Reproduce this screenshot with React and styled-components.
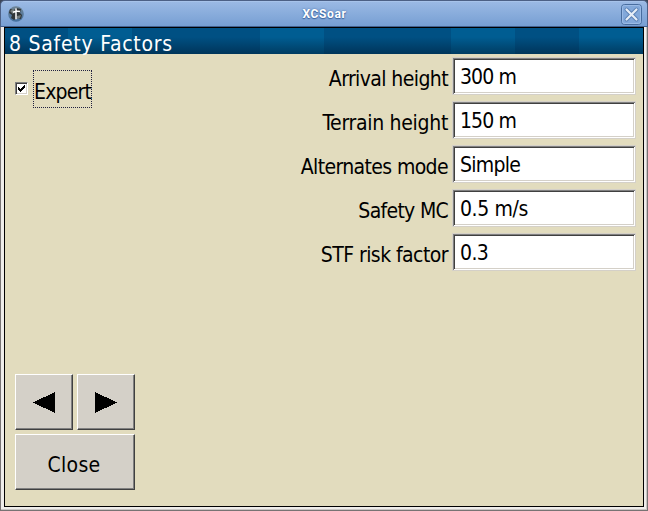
import React from 'react';
import styled, { createGlobalStyle } from 'styled-components';

const GlobalStyle = createGlobalStyle`
  * { box-sizing: border-box; }
  body {
    margin: 0;
    overflow: hidden;
    background: #3d4658;
    font-family: "DejaVu Sans Condensed", "DejaVu Sans", sans-serif;
    font-stretch: condensed;
    color: #000;
  }
`;

const Window = styled.main`
  width: 648px;
  height: 511px;
  display: flex;
  flex-direction: column;
`;

const WindowBar = styled.header`
  flex: none;
  height: 27px;
  display: grid;
  grid-template-columns: 26px 1fr 26px;
  align-items: center;
  border: 1px solid #4c6085;
  border-bottom-color: #42618f;
  border-radius: 5px 5px 0 0;
  background: linear-gradient(#b4cdf0 0, #9ab9e4 1px, #779fd3 100%);
`;

const WindowTitle = styled.h1`
  margin: 0;
  text-align: center;
  font: bold 12px/16px Roboto, "Liberation Sans", sans-serif;
  letter-spacing: 0.6px;
  color: #fff;
  text-shadow: 0 0 2px #3d659f, 0 1px 1px #3d659f;
  padding: 1px 0 0 1px;
`;

const AppIcon = styled.svg`
  width: 16px;
  height: 16px;
  margin: 0 0 0 7px;
`;

const CloseIcon = styled.svg`
  width: 21px;
  height: 21px;
  margin: 1px 0 0;
`;

const Frame = styled.div`
  flex: 1;
  min-height: 0;
  display: flex;
  border: 1px solid #777373;
  border-top: 0;
  background: #efedeb;
  padding: 0 3px 3px;
  box-shadow: inset -1px -1px #c8c5c3;
`;

const Dialog = styled.section`
  flex: 1;
  display: flex;
  flex-direction: column;
  border: 1px solid #000;
  background: #e2dcbe;
`;

const Caption = styled.h2`
  flex: none;
  height: 26px;
  margin: 0;
  padding: 4px 0 0 4px;
  font-size: 21px;
  line-height: 24px;
  font-weight: normal;
  letter-spacing: 0.75px;
  white-space: nowrap;
  color: #fff;
  background:
    linear-gradient(transparent 35%, rgba(0, 20, 40, 0.45)),
    linear-gradient(90deg,
      #005083 63px, #005d92 63px 127px, #005083 127px 255px,
      #005d92 255px 319px, #005083 319px 446px,
      #005d92 446px 510px, #005083 510px 574px, #005d92 574px);
`;

const Content = styled.div`
  flex: 1;
  min-height: 0;
  display: flex;
  justify-content: space-between;
  padding: 3px 7px 16px 10px;
`;

const Sidebar = styled.div`
  width: 120px;
  display: flex;
  flex-direction: column;
  justify-content: space-between;
`;

const CheckRow = styled.label`
  display: flex;
  align-items: flex-start;
  padding-top: 13px;
  gap: 5px;
`;

const CheckBox = styled.span`
  width: 13px;
  height: 13px;
  margin-top: 12px;
  display: flex;
  border: 1px solid;
  border-color: #808080 #fff #fff #808080;
  background: #fff;
  box-shadow: inset 1px 1px #404040, inset -1px -1px #d4d0c8;
`;

const CheckText = styled.span`
  width: 59px;
  height: 38px;
  border: 1px dotted #202040;
  font-size: 21px;
  line-height: 24px;
  letter-spacing: -0.8px;
  padding-top: 9px;
  white-space: nowrap;
`;

const Buttons = styled.div`
  display: grid;
  grid-template-columns: 58px 58px;
  grid-template-rows: 56px 56px;
  gap: 4px;
`;

const Button = styled.button`
  grid-column: span ${(p) => p.$span || 1};
  display: flex;
  align-items: center;
  justify-content: center;
  padding: ${(p) => (p.$span ? '6px 2px 0 0' : '4px 0 0')};
  border: 1px solid;
  border-color: #fff #404040 #404040 #fff;
  box-shadow: inset -1px -1px #808080;
  background: #d4d0c8;
  font: inherit;
  font-size: 21px;
  letter-spacing: 0.3px;
  color: #000;
`;

const Arrow = styled.svg`
  width: 22px;
  height: 21px;
  margin-top: -3px;
`;

const Fields = styled.div`
  width: 350px;
  display: flex;
  flex-direction: column;
  gap: 6px;
`;

const FieldRow = styled.label`
  height: 38px;
  display: grid;
  grid-template-columns: 1fr 184px;
  column-gap: 4px;
  font-size: 21px;
  line-height: 24px;
  text-align: right;
  white-space: nowrap;
`;

const FieldName = styled.span`
  padding-top: 10px;
  letter-spacing: ${(p) => p.$tracking}px;
`;

const FieldValue = styled.span`
  padding: 7px 0 0 7px;
  text-align: left;
  letter-spacing: ${(p) => p.$tracking}px;
  background: #fff;
  border: 1px solid #d4d0c8;
  box-shadow: inset 1px 1px #808080, inset -1px -1px #fff,
    inset 2px 2px #404040, inset -2px -2px #d4d0c8;
`;

const settings = [
  { name: 'Arrival height', nameTracking: -0.6, value: '300 m', valueTracking: -0.9 },
  { name: 'Terrain height', nameTracking: -0.3, value: '150 m', valueTracking: -0.9 },
  { name: 'Alternates mode', nameTracking: -0.63, value: 'Simple', valueTracking: -0.75 },
  { name: 'Safety MC', nameTracking: -0.7, value: '0.5 m/s', valueTracking: -0.4 },
  { name: 'STF risk factor', nameTracking: -0.55, value: '0.3', valueTracking: -0.6 },
];

export default function App() {
  return (
    <>
      <GlobalStyle />
      <Window>
        <WindowBar>
          <AppIcon viewBox="0 0 16 16">
            <defs>
              <linearGradient id="globe" x1="0" y1="0" x2="0" y2="1">
                <stop offset="0" stopColor="#6f8495" />
                <stop offset="1" stopColor="#426f9e" />
              </linearGradient>
            </defs>
            <circle cx="8" cy="8" r="7.8" fill="url(#globe)" />
            <path d="M2 3l4 1 2-2 5 1-1 4 2 2-1 4-4-1-3 2-3-2 1-3-3-2z" fill="#303536" />
            <path d="M2 5l3-2 2 2-2 3zM9 10l4-1-1 3-3 1z" fill="#747c7c" />
            <path d="M8 2.2v11M5 6.3q4-1.8 7-.8" fill="none" stroke="#fff" strokeWidth="1.5" />
          </AppIcon>
          <WindowTitle>XCSoar</WindowTitle>
          <CloseIcon viewBox="0 0 21 21">
            <rect x=".5" y=".5" width="20" height="20" rx="3" fill="#82a8da" stroke="#486d9f" />
            <rect x="1.5" y="1.5" width="18" height="18" rx="2" fill="none" stroke="#9bbbe6" />
            <path d="M5.5 5.5l10 10m0-10l-10 10" stroke="#5a80b5" strokeWidth="4" strokeLinecap="round" />
            <path d="M5.5 5.5l10 10m0-10l-10 10" stroke="#e6edf7" strokeWidth="2.2" strokeLinecap="round" />
          </CloseIcon>
        </WindowBar>
        <Frame>
          <Dialog>
            <Caption>8 Safety Factors</Caption>
            <Content>
              <Sidebar>
                <CheckRow>
                  <CheckBox>
                    <svg width="11" height="11" viewBox="0 0 11 11" shapeRendering="crispEdges">
                      <path d="M2 4h1v1h1v1h1v-1h1v-1h1v-1h1v-1h1v3h-1v1h-1v1h-1v1h-1v1h-1v-1h-1v-1h-1z" />
                    </svg>
                  </CheckBox>
                  <CheckText>Expert</CheckText>
                </CheckRow>
                <Buttons>
                  <Button aria-label="Previous">
                    <Arrow viewBox="0 0 22 21" shapeRendering="crispEdges"><path d="M22 0v21L0 10.5z" /></Arrow>
                  </Button>
                  <Button aria-label="Next">
                    <Arrow viewBox="0 0 22 21" shapeRendering="crispEdges"><path d="M0 0v21l22-10.5z" /></Arrow>
                  </Button>
                  <Button $span={2}>Close</Button>
                </Buttons>
              </Sidebar>
              <Fields>
                {settings.map((s) => (
                  <FieldRow key={s.name}>
                    <FieldName $tracking={s.nameTracking}>{s.name}</FieldName>
                    <FieldValue $tracking={s.valueTracking}>{s.value}</FieldValue>
                  </FieldRow>
                ))}
              </Fields>
            </Content>
          </Dialog>
        </Frame>
      </Window>
    </>
  );
}
